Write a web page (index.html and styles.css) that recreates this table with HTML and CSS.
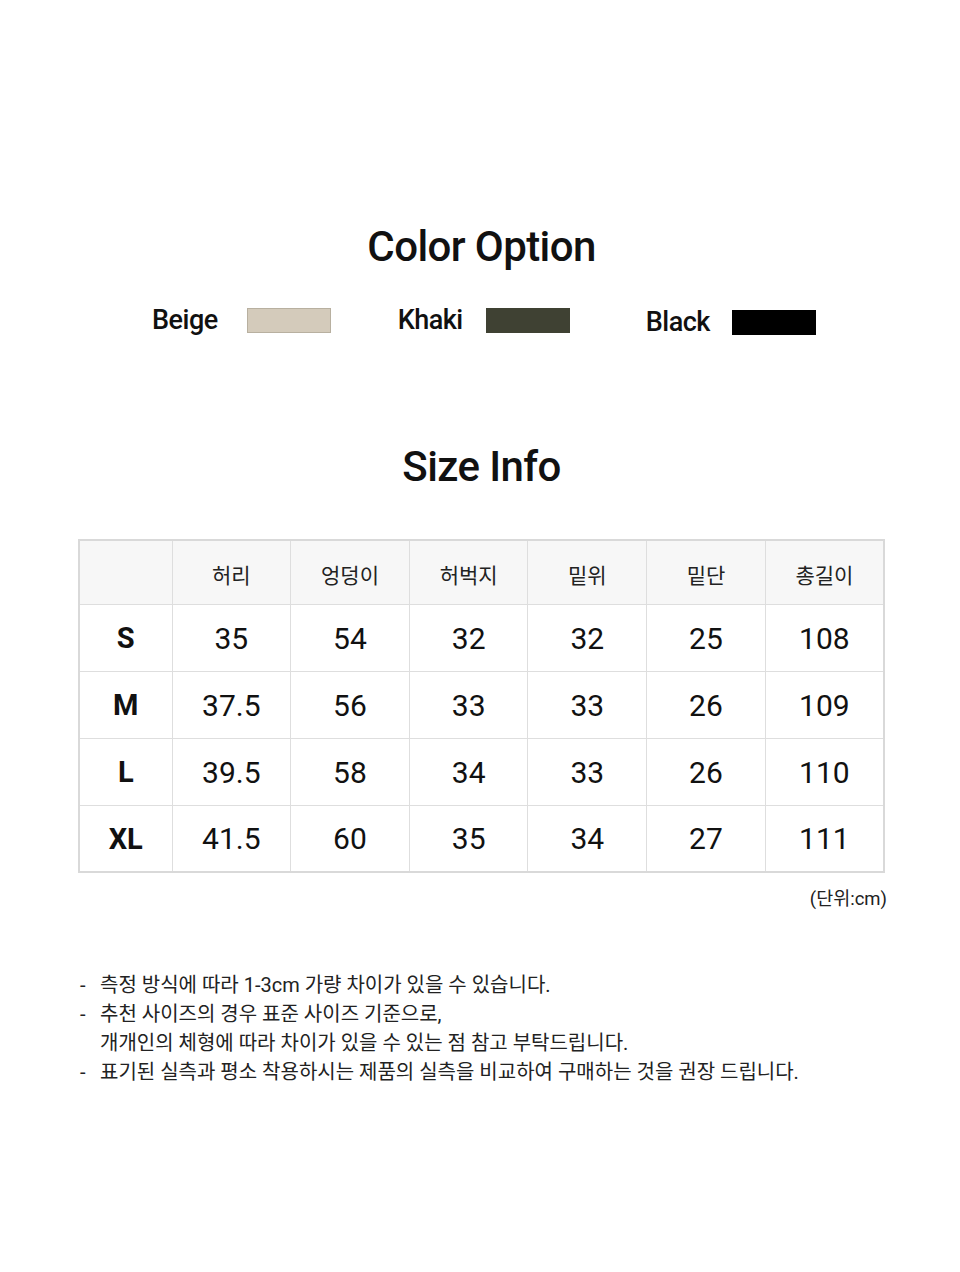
FILE: index.html
```html
<!DOCTYPE html>
<html lang="ko">
<head>
<meta charset="utf-8">
<link rel="stylesheet" href="styles.css">
</head>
<body>
<main class="page">
  <h2 class="title title-color">Color Option</h2>
  <div class="colors">
    <div class="color"><span class="color-name">Beige</span><span class="swatch beige"></span></div>
    <div class="color khaki-group"><span class="color-name">Khaki</span><span class="swatch khaki"></span></div>
    <div class="color black-group"><span class="color-name black-name">Black</span><span class="swatch black"></span></div>
  </div>

  <h2 class="title title-size">Size Info</h2>
  <table class="size-table">
    <thead>
      <tr><th></th><th>허리</th><th>엉덩이</th><th>허벅지</th><th>밑위</th><th>밑단</th><th>총길이</th></tr>
    </thead>
    <tbody>
      <tr><th>S</th><td>35</td><td>54</td><td>32</td><td>32</td><td>25</td><td>108</td></tr>
      <tr><th>M</th><td>37.5</td><td>56</td><td>33</td><td>33</td><td>26</td><td>109</td></tr>
      <tr><th>L</th><td>39.5</td><td>58</td><td>34</td><td>33</td><td>26</td><td>110</td></tr>
      <tr><th>XL</th><td>41.5</td><td>60</td><td>35</td><td>34</td><td>27</td><td>111</td></tr>
    </tbody>
  </table>
  <p class="unit">(단위:cm)</p>

  <ul class="notes">
    <li>측정 방식에 따라 1-3cm 가량 차이가 있을 수 있습니다.</li>
    <li>추천 사이즈의 경우 표준 사이즈 기준으로,<br>개개인의 체형에 따라 차이가 있을 수 있는 점 참고 부탁드립니다.</li>
    <li>표기된 실측과 평소 착용하시는 제품의 실측을 비교하여 구매하는 것을 권장 드립니다.</li>
  </ul>
</main>
</body>
</html>
```

FILE: styles.css
```css
* { box-sizing: border-box; }
html, body { margin: 0; padding: 0; background: #fff; }
body {
  font-family: Roboto, "Noto Sans CJK KR", "Liberation Sans", sans-serif;
  color: #111;
  width: 960px;
  height: 1272px;
  overflow: hidden;
}
.page {
  padding: 222px 75px 0 78px;
  display: flex;
  flex-direction: column;
}
.title {
  margin: 0;
  text-align: center;
  font-size: 42px;
  font-weight: 500;
  letter-spacing: -0.6px;
  line-height: 50px;
  color: #111;
}
.title-size { margin-top: 106px; }
.colors {
  display: flex;
  justify-content: flex-start;
  margin-top: 32px;
  padding-left: 74px;
}
.color {
  display: flex;
  align-items: center;
  gap: 29px;
}
.khaki-group { margin-left: 67px; gap: 23px; }
.black-group { margin-left: 76px; gap: 22px; }
.color-name {
  font-size: 27px;
  font-weight: 500;
  letter-spacing: -0.5px;
}
.swatch {
  width: 84px;
  height: 25px;
  display: block;
}
.beige { background: #d4cbbb; border: 1px solid #b8b0a0; }
.khaki { background: #3f4133; }
.black { background: #000; }
.black-name { position: relative; top: 2px; }
.black-group .swatch { position: relative; top: 2px; }

.size-table {
  margin-top: 47px;
  width: 807px;
  border-collapse: collapse;
  border: 2px solid #d9d9d9;
  table-layout: fixed;
}
.size-table th, .size-table td {
  border: 1px solid #dedede;
  text-align: center;
  padding: 0;
}
.size-table thead th {
  background: #f7f7f7;
  height: 64px;
  padding-top: 4px;
  font-size: 21px;
  font-weight: 400;
  color: #222;
}
.size-table thead th:first-child { width: 93px; }
.size-table tbody th, .size-table tbody td {
  height: 67px;
  background: #fff;
  padding-top: 1px;
}
.size-table tbody th {
  font-size: 29px;
  font-weight: 700;
}
.size-table tbody td {
  font-size: 30px;
  font-weight: 400;
}
.unit {
  margin: 11px 0 0;
  text-align: right;
  font-size: 18.5px;
  color: #222;
  margin-right: -2px;
}
.notes {
  list-style: none;
  margin: 61px 0 0;
  padding: 0 0 0 2px;
  font-size: 20px;
  line-height: 29px;
  color: #222;
}
.notes li {
  position: relative;
  padding-left: 20px;
}
.notes li::before {
  content: "-";
  position: absolute;
  left: 0;
  top: 0;
}
```
